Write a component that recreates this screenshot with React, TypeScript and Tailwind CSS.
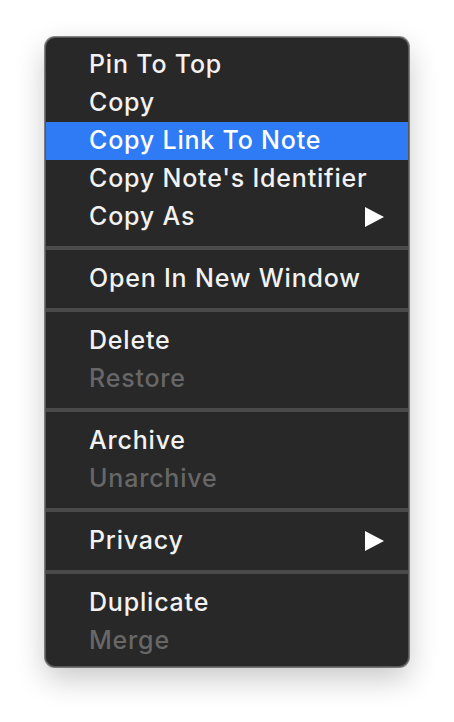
import React from 'react';

type Item = { label: string; disabled?: boolean; submenu?: boolean; active?: boolean };

const groups: Item[][] = [
  [
    { label: 'Pin To Top' },
    { label: 'Copy' },
    { label: 'Copy Link To Note', active: true },
    { label: "Copy Note's Identifier" },
    { label: 'Copy As', submenu: true },
  ],
  [{ label: 'Open In New Window' }],
  [{ label: 'Delete' }, { label: 'Restore', disabled: true }],
  [{ label: 'Archive' }, { label: 'Unarchive', disabled: true }],
  [{ label: 'Privacy', submenu: true }],
  [{ label: 'Duplicate' }, { label: 'Merge', disabled: true }],
];

function Arrow() {
  return (
    <svg width="19" height="20" viewBox="0 0 19 20" className="shrink-0 mt-[2px]">
      <polygon points="0,0 19,10 0,20" fill="#ffffff" />
    </svg>
  );
}

function MenuRow({ item }: { item: Item }) {
  return (
    <div
      className={`flex items-center justify-between h-[38px] pl-[43px] pr-[24px] pb-[2px] text-[25px] font-medium tracking-[0.8px] leading-none ${
        item.active ? 'bg-[#2f7bf5] text-white' : item.disabled ? 'text-[#676767]' : 'text-[#f2f2f2]'
      }`}
    >
      <span>{item.label}</span>
      {item.submenu && <Arrow />}
    </div>
  );
}

export default function App() {
  return (
    <main className="min-h-screen bg-white pt-[37px] pl-[45px]" style={{ fontFamily: 'Inter, "Noto Sans", sans-serif' }}>
      <div className="w-[364px] rounded-[10px] border border-[#565656] bg-[#282828] pt-[8px] pb-[6px] shadow-[0_0_0_1px_rgba(0,0,0,0.45),0_12px_30px_rgba(0,0,0,0.22)] overflow-hidden">
        {groups.map((group, gi) => (
          <div key={gi}>
            {gi > 0 && <div className="my-[10px] h-[4px] bg-[#4a4a4a]" />}
            {group.map((item) => (
              <MenuRow key={item.label} item={item} />
            ))}
          </div>
        ))}
      </div>
    </main>
  );
}
